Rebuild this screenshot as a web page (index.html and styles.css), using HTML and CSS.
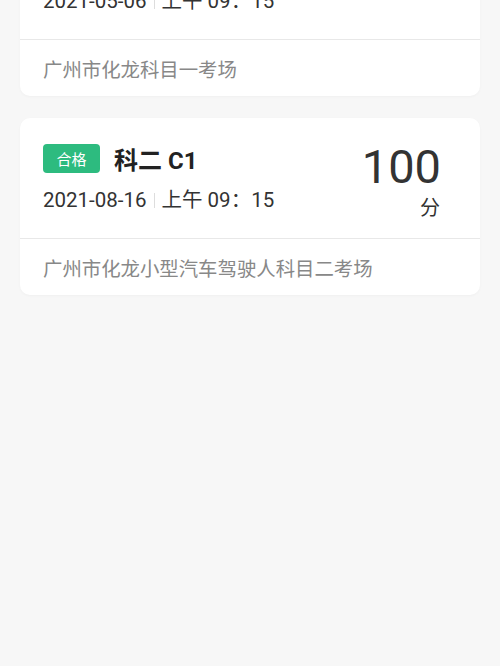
FILE: index.html
```html
<!DOCTYPE html>
<html lang="zh-CN">
<head>
<meta charset="utf-8">
<link rel="stylesheet" href="styles.css">
</head>
<body>
<div class="list">
  <div class="card">
    <div class="card-main">
      <div class="info">
        <div class="title-row">
          <span class="badge">合格</span>
          <span class="title">科一 C1</span>
        </div>
        <div class="date-row"><span>2021-05-06</span><span class="sep"></span><span>上午 09：15</span></div>
      </div>
    </div>
    <div class="card-addr">广州市化龙科目一考场</div>
  </div>
  <div class="card">
    <div class="card-main">
      <div class="info">
        <div class="title-row">
          <span class="badge">合格</span>
          <span class="title">科二 C1</span>
        </div>
        <div class="date-row"><span>2021-08-16</span><span class="sep"></span><span>上午 09：15</span></div>
      </div>
      <div class="score"><span class="num">100</span><span class="unit">分</span></div>
    </div>
    <div class="card-addr">广州市化龙小型汽车驾驶人科目二考场</div>
  </div>
</div>
</body>
</html>
```
FILE: styles.css
```css
html, body {
  margin: 0;
  padding: 0;
  background: #f7f7f7;
  height: 100%;
  overflow: hidden;
  font-family: Roboto, "Noto Sans CJK SC", sans-serif;
}
.list {
  margin-top: -81px;
  padding: 0 20px;
  display: flex;
  flex-direction: column;
  gap: 22px;
}
.card {
  background: #fff;
  border-radius: 10px;
  box-shadow: 0 1px 3px rgba(0,0,0,0.03);
}
.card-main {
  height: 121px;
  box-sizing: border-box;
  padding: 26px 39px 0 23px;
  display: flex;
  justify-content: space-between;
  border-bottom: 1px solid #e8e8e8;
}
.info {
  display: flex;
  flex-direction: column;
  gap: 13px;
}
.title-row {
  display: flex;
  align-items: center;
  gap: 14px;
  height: 29px;
}
.badge {
  width: 57px;
  height: 29px;
  border-radius: 4px;
  background: #2dbb7f;
  color: #fff;
  font-size: 15px;
  display: flex;
  align-items: center;
  justify-content: center;
}
.title {
  font-size: 24px;
  font-weight: 700;
  color: #222;
}
.date-row {
  display: flex;
  align-items: center;
  font-size: 20.5px;
  color: #333;
  line-height: 28px;
}
.sep {
  width: 1px;
  height: 15px;
  background: #ddd;
  margin: 0 7px;
}
.score {
  display: flex;
  flex-direction: column;
  align-items: flex-end;
  color: #333;
}
.num {
  font-size: 47px;
  line-height: 48px;
  margin-top: -1px;
}
.unit {
  font-size: 20px;
  line-height: 26px;
  margin-top: 4px;
  margin-right: 1px;
}
.card-addr {
  height: 56px;
  padding-left: 23px;
  display: flex;
  align-items: center;
  font-size: 19.4px;
  color: #888;
}
```
